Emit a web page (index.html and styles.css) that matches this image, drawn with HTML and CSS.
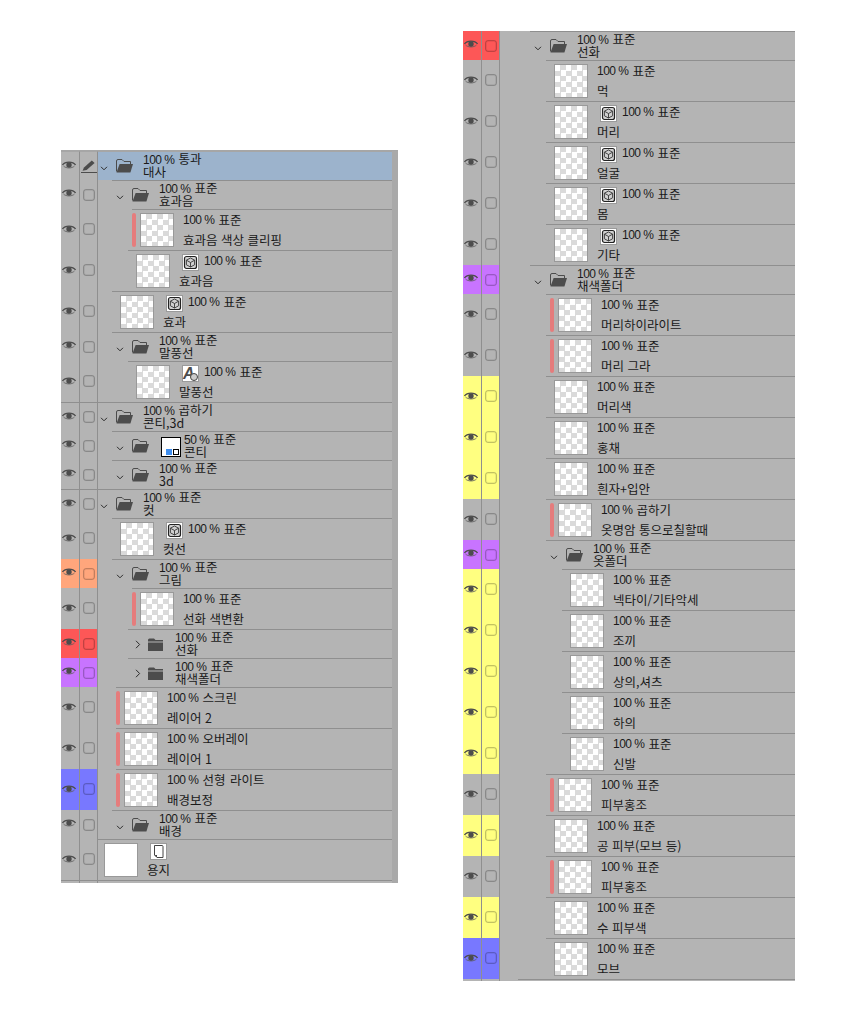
FILE: index.html
```html
<!DOCTYPE html>
<html lang="ko">
<head>
<meta charset="utf-8">
<title>레이어</title>
<link rel="stylesheet" href="styles.css">
</head>
<body>
<svg class="defs" width="0" height="0" aria-hidden="true">
  <symbol id="eye" viewBox="0 0 14 10"><path d="M.5 5C3 1.2 11 1.2 13.5 5" fill="none" stroke="#4c4c4c" stroke-width="1.3"/><path d="M1.5 6C4 8.6 10 8.6 12.5 6" fill="none" stroke="#5c5c5c" stroke-width=".8"/><circle cx="7" cy="5" r="2.7" fill="#4c4c4c"/></symbol>
  <symbol id="open" viewBox="0 0 17 14"><path d="M.5 12.5V2Q.5.5 2 .5H6L8 2.5H14.5V5" fill="none" stroke="#4c4c4c"/><path d="M3.6 5H17L14.4 13.5H.5Z" fill="#4c4c4c"/></symbol>
  <symbol id="closed" viewBox="0 0 15 13"><path d="M0 2Q0 .5 1.5 .5H6L7.5 2H15V3.5H0ZM0 4.5H15V13H0Z" fill="#4c4c4c"/></symbol>
  <symbol id="down" viewBox="0 0 8 5"><path d="M1 .8L4 3.8 7 .8" fill="none" stroke="#2c2c2c"/></symbol>
  <symbol id="right" viewBox="0 0 8 9"><path d="M2 .8L5.6 4.5 2 8.2" fill="none" stroke="#2c2c2c"/></symbol>
  <symbol id="cube" viewBox="0 0 17 17"><rect x=".5" y=".5" width="16" height="16" fill="#fff" stroke="#9a9a9a"/><rect x="2.5" y="2.5" width="12" height="12" rx="2" fill="#d0d0d0" stroke="#222" stroke-width="1.2"/><path d="M8.5 4L12.6 6.2V10.8L8.5 13 4.4 10.8V6.2ZM4.4 6.2L8.5 8.5 12.6 6.2M8.5 8.5V13" fill="none" stroke="#333" stroke-width=".9"/></symbol>
  <symbol id="page" viewBox="0 0 17 17"><rect x=".5" y=".5" width="16" height="16" fill="#fff" stroke="#9a9a9a"/><path d="M4.5 2.5H12Q13 2.5 13 3.5V14.5H7L4.5 12Z" fill="#fff" stroke="#444"/><path d="M4.5 12H7V14.5Z" fill="#444"/></symbol>
  <symbol id="pencil" viewBox="0 0 16 13"><path d="M1.5 10.8L3 7.6 10.8.6 13.6 3 5.6 10Z" fill="#4c4c4c"/><path d="M0 12.5H16" stroke="#4c4c4c"/></symbol>
</svg>

<div class="sheet">
  <section class="panel panel-a">
    <div class="row folder full first selected"><div class="vis"><svg class="eye"><use href="#eye"/></svg></div><div class="lock"><svg class="pencil"><use href="#pencil"/></svg></div><div class="content"><div class="inner root"><span class="chev"><svg class="arrow"><use href="#down"/></svg></span><span class="ficon"><svg class="open"><use href="#open"/></svg></span><div class="ftext"><div><span class="pct">100 %</span><span class="mode">통과</span></div><div>대사</div></div></div></div></div>
    <div class="row folder"><div class="vis"><svg class="eye"><use href="#eye"/></svg></div><div class="lock"><span class="check"></span></div><div class="content"><div class="inner i14"><span class="chev"><svg class="arrow"><use href="#down"/></svg></span><span class="ficon"><svg class="open"><use href="#open"/></svg></span><div class="ftext"><div><span class="pct">100 %</span><span class="mode">표준</span></div><div>효과음</div></div></div></div></div>
    <div class="row layer"><div class="vis"><svg class="eye"><use href="#eye"/></svg></div><div class="lock"><span class="check"></span></div><div class="content"><div class="inner i34"><span class="bar"></span><span class="thumb"></span><div class="ltext"><div class="line"><span class="pct">100 %</span><span class="mode">표준</span></div><div class="line">효과음 색상 클리핑</div></div></div></div></div>
    <div class="row layer"><div class="vis"><svg class="eye"><use href="#eye"/></svg></div><div class="lock"><span class="check"></span></div><div class="content"><div class="inner i30"><span class="thumb plain"></span><div class="ltext"><div class="line"><svg class="kind"><use href="#cube"/></svg><span class="pct">100 %</span><span class="mode">표준</span></div><div class="line">효과음</div></div></div></div></div>
    <div class="row layer"><div class="vis"><svg class="eye"><use href="#eye"/></svg></div><div class="lock"><span class="check"></span></div><div class="content"><div class="inner i14"><span class="thumb plain"></span><div class="ltext"><div class="line"><svg class="kind"><use href="#cube"/></svg><span class="pct">100 %</span><span class="mode">표준</span></div><div class="line">효과</div></div></div></div></div>
    <div class="row folder"><div class="vis"><svg class="eye"><use href="#eye"/></svg></div><div class="lock"><span class="check"></span></div><div class="content"><div class="inner i14"><span class="chev"><svg class="arrow"><use href="#down"/></svg></span><span class="ficon"><svg class="open"><use href="#open"/></svg></span><div class="ftext"><div><span class="pct">100 %</span><span class="mode">표준</span></div><div>말풍선</div></div></div></div></div>
    <div class="row layer"><div class="vis"><svg class="eye"><use href="#eye"/></svg></div><div class="lock"><span class="check"></span></div><div class="content"><div class="inner i30"><span class="thumb plain"></span><div class="ltext"><div class="line"><span class="kind textkind">A</span><span class="pct">100 %</span><span class="mode">표준</span></div><div class="line">말풍선</div></div></div></div></div>
    <div class="row folder full"><div class="vis"><svg class="eye"><use href="#eye"/></svg></div><div class="lock"><span class="check"></span></div><div class="content"><div class="inner root"><span class="chev"><svg class="arrow"><use href="#down"/></svg></span><span class="ficon"><svg class="open"><use href="#open"/></svg></span><div class="ftext"><div><span class="pct">100 %</span><span class="mode">곱하기</span></div><div>콘티,3d</div></div></div></div></div>
    <div class="row folder"><div class="vis"><svg class="eye"><use href="#eye"/></svg></div><div class="lock"><span class="check"></span></div><div class="content"><div class="inner i14"><span class="chev"><svg class="arrow"><use href="#down"/></svg></span><span class="ficon with-mask"><svg class="open"><use href="#open"/></svg></span><span class="mask"><span class="mask-blue"></span><span class="mask-box"></span></span><div class="ftext after-mask"><div><span class="pct">50 %</span><span class="mode">표준</span></div><div>콘티</div></div></div></div></div>
    <div class="row folder"><div class="vis"><svg class="eye"><use href="#eye"/></svg></div><div class="lock"><span class="check"></span></div><div class="content"><div class="inner i14"><span class="chev"><svg class="arrow"><use href="#down"/></svg></span><span class="ficon"><svg class="open"><use href="#open"/></svg></span><div class="ftext"><div><span class="pct">100 %</span><span class="mode">표준</span></div><div>3d</div></div></div></div></div>
    <div class="row folder full"><div class="vis"><svg class="eye"><use href="#eye"/></svg></div><div class="lock"><span class="check"></span></div><div class="content"><div class="inner root"><span class="chev"><svg class="arrow"><use href="#down"/></svg></span><span class="ficon"><svg class="open"><use href="#open"/></svg></span><div class="ftext"><div><span class="pct">100 %</span><span class="mode">표준</span></div><div>컷</div></div></div></div></div>
    <div class="row layer"><div class="vis"><svg class="eye"><use href="#eye"/></svg></div><div class="lock"><span class="check"></span></div><div class="content"><div class="inner i14"><span class="thumb plain"></span><div class="ltext"><div class="line"><svg class="kind"><use href="#cube"/></svg><span class="pct">100 %</span><span class="mode">표준</span></div><div class="line">컷선</div></div></div></div></div>
    <div class="row folder orange"><div class="vis"><svg class="eye"><use href="#eye"/></svg></div><div class="lock"><span class="check"></span></div><div class="content"><div class="inner i14"><span class="chev"><svg class="arrow"><use href="#down"/></svg></span><span class="ficon"><svg class="open"><use href="#open"/></svg></span><div class="ftext"><div><span class="pct">100 %</span><span class="mode">표준</span></div><div>그림</div></div></div></div></div>
    <div class="row layer"><div class="vis"><svg class="eye"><use href="#eye"/></svg></div><div class="lock"><span class="check"></span></div><div class="content"><div class="inner i34"><span class="bar"></span><span class="thumb"></span><div class="ltext"><div class="line"><span class="pct">100 %</span><span class="mode">표준</span></div><div class="line">선화 색변환</div></div></div></div></div>
    <div class="row folder red"><div class="vis"><svg class="eye"><use href="#eye"/></svg></div><div class="lock"><span class="check"></span></div><div class="content"><div class="inner i30"><span class="chev shut"><svg class="arrow-r"><use href="#right"/></svg></span><span class="ficon"><svg class="closed"><use href="#closed"/></svg></span><div class="ftext"><div><span class="pct">100 %</span><span class="mode">표준</span></div><div>선화</div></div></div></div></div>
    <div class="row folder purple"><div class="vis"><svg class="eye"><use href="#eye"/></svg></div><div class="lock"><span class="check"></span></div><div class="content"><div class="inner i30"><span class="chev shut"><svg class="arrow-r"><use href="#right"/></svg></span><span class="ficon"><svg class="closed"><use href="#closed"/></svg></span><div class="ftext"><div><span class="pct">100 %</span><span class="mode">표준</span></div><div>채색폴더</div></div></div></div></div>
    <div class="row layer"><div class="vis"><svg class="eye"><use href="#eye"/></svg></div><div class="lock"><span class="check"></span></div><div class="content"><div class="inner i18"><span class="bar"></span><span class="thumb"></span><div class="ltext"><div class="line"><span class="pct">100 %</span><span class="mode">스크린</span></div><div class="line">레이어 2</div></div></div></div></div>
    <div class="row layer"><div class="vis"><svg class="eye"><use href="#eye"/></svg></div><div class="lock"><span class="check"></span></div><div class="content"><div class="inner i18"><span class="bar"></span><span class="thumb"></span><div class="ltext"><div class="line"><span class="pct">100 %</span><span class="mode">오버레이</span></div><div class="line">레이어 1</div></div></div></div></div>
    <div class="row layer blue"><div class="vis"><svg class="eye"><use href="#eye"/></svg></div><div class="lock"><span class="check"></span></div><div class="content"><div class="inner i18"><span class="bar"></span><span class="thumb"></span><div class="ltext"><div class="line"><span class="pct">100 %</span><span class="mode">선형 라이트</span></div><div class="line">배경보정</div></div></div></div></div>
    <div class="row folder"><div class="vis"><svg class="eye"><use href="#eye"/></svg></div><div class="lock"><span class="check"></span></div><div class="content"><div class="inner i14"><span class="chev"><svg class="arrow"><use href="#down"/></svg></span><span class="ficon"><svg class="open"><use href="#open"/></svg></span><div class="ftext"><div><span class="pct">100 %</span><span class="mode">표준</span></div><div>배경</div></div></div></div></div>
    <div class="row layer"><div class="vis"><svg class="eye"><use href="#eye"/></svg></div><div class="lock"><span class="check"></span></div><div class="content rule-top"><div class="inner root"><span class="thumb plain paper"></span><div class="ltext"><div class="line"><svg class="kind"><use href="#page"/></svg></div><div class="line">용지</div></div></div></div></div>
    <div class="foot foot-a"><div class="vis"></div><div class="lock"></div><div class="content"></div></div>
  </section>

  <section class="panel panel-b">
    <div class="row folder red"><div class="vis"><svg class="eye"><use href="#eye"/></svg></div><div class="lock"><span class="check"></span></div><div class="content"><div class="inner i30"><span class="chev"><svg class="arrow"><use href="#down"/></svg></span><span class="ficon"><svg class="open"><use href="#open"/></svg></span><div class="ftext"><div><span class="pct">100 %</span><span class="mode">표준</span></div><div>선화</div></div></div></div></div>
    <div class="row layer"><div class="vis"><svg class="eye"><use href="#eye"/></svg></div><div class="lock"><span class="check"></span></div><div class="content"><div class="inner i46"><span class="thumb plain"></span><div class="ltext"><div class="line"><span class="pct">100 %</span><span class="mode">표준</span></div><div class="line">먹</div></div></div></div></div>
    <div class="row layer"><div class="vis"><svg class="eye"><use href="#eye"/></svg></div><div class="lock"><span class="check"></span></div><div class="content"><div class="inner i46"><span class="thumb plain"></span><div class="ltext"><div class="line"><svg class="kind"><use href="#cube"/></svg><span class="pct">100 %</span><span class="mode">표준</span></div><div class="line">머리</div></div></div></div></div>
    <div class="row layer"><div class="vis"><svg class="eye"><use href="#eye"/></svg></div><div class="lock"><span class="check"></span></div><div class="content"><div class="inner i46"><span class="thumb plain"></span><div class="ltext"><div class="line"><svg class="kind"><use href="#cube"/></svg><span class="pct">100 %</span><span class="mode">표준</span></div><div class="line">얼굴</div></div></div></div></div>
    <div class="row layer"><div class="vis"><svg class="eye"><use href="#eye"/></svg></div><div class="lock"><span class="check"></span></div><div class="content"><div class="inner i46"><span class="thumb plain"></span><div class="ltext"><div class="line"><svg class="kind"><use href="#cube"/></svg><span class="pct">100 %</span><span class="mode">표준</span></div><div class="line">몸</div></div></div></div></div>
    <div class="row layer"><div class="vis"><svg class="eye"><use href="#eye"/></svg></div><div class="lock"><span class="check"></span></div><div class="content"><div class="inner i46"><span class="thumb plain"></span><div class="ltext"><div class="line"><svg class="kind"><use href="#cube"/></svg><span class="pct">100 %</span><span class="mode">표준</span></div><div class="line">기타</div></div></div></div></div>
    <div class="row folder purple"><div class="vis"><svg class="eye"><use href="#eye"/></svg></div><div class="lock"><span class="check"></span></div><div class="content"><div class="inner i30"><span class="chev"><svg class="arrow"><use href="#down"/></svg></span><span class="ficon"><svg class="open"><use href="#open"/></svg></span><div class="ftext"><div><span class="pct">100 %</span><span class="mode">표준</span></div><div>채색폴더</div></div></div></div></div>
    <div class="row layer"><div class="vis"><svg class="eye"><use href="#eye"/></svg></div><div class="lock"><span class="check"></span></div><div class="content"><div class="inner i46"><span class="bar"></span><span class="thumb"></span><div class="ltext"><div class="line"><span class="pct">100 %</span><span class="mode">표준</span></div><div class="line">머리하이라이트</div></div></div></div></div>
    <div class="row layer"><div class="vis"><svg class="eye"><use href="#eye"/></svg></div><div class="lock"><span class="check"></span></div><div class="content"><div class="inner i46"><span class="bar"></span><span class="thumb"></span><div class="ltext"><div class="line"><span class="pct">100 %</span><span class="mode">표준</span></div><div class="line">머리 그라</div></div></div></div></div>
    <div class="row layer yellow"><div class="vis"><svg class="eye"><use href="#eye"/></svg></div><div class="lock"><span class="check"></span></div><div class="content"><div class="inner i46"><span class="thumb plain"></span><div class="ltext"><div class="line"><span class="pct">100 %</span><span class="mode">표준</span></div><div class="line">머리색</div></div></div></div></div>
    <div class="row layer yellow"><div class="vis"><svg class="eye"><use href="#eye"/></svg></div><div class="lock"><span class="check"></span></div><div class="content"><div class="inner i46"><span class="thumb plain"></span><div class="ltext"><div class="line"><span class="pct">100 %</span><span class="mode">표준</span></div><div class="line">홍채</div></div></div></div></div>
    <div class="row layer yellow"><div class="vis"><svg class="eye"><use href="#eye"/></svg></div><div class="lock"><span class="check"></span></div><div class="content"><div class="inner i46"><span class="thumb plain"></span><div class="ltext"><div class="line"><span class="pct">100 %</span><span class="mode">표준</span></div><div class="line">흰자+입안</div></div></div></div></div>
    <div class="row layer"><div class="vis"><svg class="eye"><use href="#eye"/></svg></div><div class="lock"><span class="check"></span></div><div class="content"><div class="inner i46"><span class="bar"></span><span class="thumb"></span><div class="ltext"><div class="line"><span class="pct">100 %</span><span class="mode">곱하기</span></div><div class="line">옷명암 통으로칠할때</div></div></div></div></div>
    <div class="row folder purple"><div class="vis"><svg class="eye"><use href="#eye"/></svg></div><div class="lock"><span class="check"></span></div><div class="content"><div class="inner i46"><span class="chev"><svg class="arrow"><use href="#down"/></svg></span><span class="ficon"><svg class="open"><use href="#open"/></svg></span><div class="ftext"><div><span class="pct">100 %</span><span class="mode">표준</span></div><div>옷폴더</div></div></div></div></div>
    <div class="row layer yellow"><div class="vis"><svg class="eye"><use href="#eye"/></svg></div><div class="lock"><span class="check"></span></div><div class="content"><div class="inner i62"><span class="thumb plain"></span><div class="ltext"><div class="line"><span class="pct">100 %</span><span class="mode">표준</span></div><div class="line">넥타이/기타악세</div></div></div></div></div>
    <div class="row layer yellow"><div class="vis"><svg class="eye"><use href="#eye"/></svg></div><div class="lock"><span class="check"></span></div><div class="content"><div class="inner i62"><span class="thumb plain"></span><div class="ltext"><div class="line"><span class="pct">100 %</span><span class="mode">표준</span></div><div class="line">조끼</div></div></div></div></div>
    <div class="row layer yellow"><div class="vis"><svg class="eye"><use href="#eye"/></svg></div><div class="lock"><span class="check"></span></div><div class="content"><div class="inner i62"><span class="thumb plain"></span><div class="ltext"><div class="line"><span class="pct">100 %</span><span class="mode">표준</span></div><div class="line">상의,셔츠</div></div></div></div></div>
    <div class="row layer yellow"><div class="vis"><svg class="eye"><use href="#eye"/></svg></div><div class="lock"><span class="check"></span></div><div class="content"><div class="inner i62"><span class="thumb plain"></span><div class="ltext"><div class="line"><span class="pct">100 %</span><span class="mode">표준</span></div><div class="line">하의</div></div></div></div></div>
    <div class="row layer yellow"><div class="vis"><svg class="eye"><use href="#eye"/></svg></div><div class="lock"><span class="check"></span></div><div class="content"><div class="inner i62"><span class="thumb plain"></span><div class="ltext"><div class="line"><span class="pct">100 %</span><span class="mode">표준</span></div><div class="line">신발</div></div></div></div></div>
    <div class="row layer"><div class="vis"><svg class="eye"><use href="#eye"/></svg></div><div class="lock"><span class="check"></span></div><div class="content"><div class="inner i46"><span class="bar"></span><span class="thumb"></span><div class="ltext"><div class="line"><span class="pct">100 %</span><span class="mode">표준</span></div><div class="line">피부홍조</div></div></div></div></div>
    <div class="row layer yellow"><div class="vis"><svg class="eye"><use href="#eye"/></svg></div><div class="lock"><span class="check"></span></div><div class="content"><div class="inner i46"><span class="thumb plain"></span><div class="ltext"><div class="line"><span class="pct">100 %</span><span class="mode">표준</span></div><div class="line">공 피부(모브 등)</div></div></div></div></div>
    <div class="row layer"><div class="vis"><svg class="eye"><use href="#eye"/></svg></div><div class="lock"><span class="check"></span></div><div class="content"><div class="inner i46"><span class="bar"></span><span class="thumb"></span><div class="ltext"><div class="line"><span class="pct">100 %</span><span class="mode">표준</span></div><div class="line">피부홍조</div></div></div></div></div>
    <div class="row layer yellow"><div class="vis"><svg class="eye"><use href="#eye"/></svg></div><div class="lock"><span class="check"></span></div><div class="content"><div class="inner i46"><span class="thumb plain"></span><div class="ltext"><div class="line"><span class="pct">100 %</span><span class="mode">표준</span></div><div class="line">수 피부색</div></div></div></div></div>
    <div class="row layer blue"><div class="vis"><svg class="eye"><use href="#eye"/></svg></div><div class="lock"><span class="check"></span></div><div class="content"><div class="inner i46"><span class="thumb plain"></span><div class="ltext"><div class="line"><span class="pct">100 %</span><span class="mode">표준</span></div><div class="line">모브</div></div></div></div></div>
    <div class="foot foot-b"><div class="vis"></div><div class="lock"></div><div class="content"><div class="inner i18"></div></div></div>
  </section>
</div>
</body>
</html>
```

FILE: styles.css
```css
* { box-sizing: border-box; }

html, body { margin: 0; background: #fff; }

body {
  font-family: "Noto Sans CJK KR", "Liberation Sans", sans-serif;
  font-size: 12.5px;
  color: #1a1a1a;
}

.defs { position: absolute; }

.sheet {
  display: flex;
  align-items: flex-start;
  padding-left: 61px;
  gap: 65px;
}

.panel { background: #b4b4b4; }

.panel-a {
  width: 337px;
  margin-top: 150px;
  padding-right: 6px;
  border-top: 1px solid #a6a6a6;
  background: #a9a9a9;
}

.panel-b { width: 332px; margin-top: 31px; }

.row, .foot {
  display: flex;
  background: #b4b4b4;
}
.row.layer { height: 41px; }
.row.folder { height: 29px; }

.vis, .lock {
  flex: none;
  display: flex;
  align-items: center;
  background: var(--tag, transparent);
  border-right: 1px solid #8f8f8f;
}
.vis { width: 19px; padding-left: 1px; }
.lock { width: 18px; justify-content: center; }
.layer .vis { padding-bottom: 2px; }
.folder .vis { padding-bottom: 3px; }
.layer .lock { padding-bottom: 1px; }

.content { flex: 1; min-width: 0; }
.rule-top { border-top: 1px solid #8f8f8f; }

.inner {
  display: flex;
  align-items: center;
  height: 100%;
  border-top: 1px solid #8f8f8f;
  white-space: nowrap;
}

.full > * { border-top: 1px solid #8f8f8f; }
.full .inner { border-top: 0; }
.first > * { border-top-color: #a6a6a6; }
.selected .content { background: #9cb3cc; }

.root { margin-left: -2px; border-top: 0; }
.i14 { margin-left: 14px; }
.i18 { margin-left: 18px; }
.i30 { margin-left: 30px; }
.i34 { margin-left: 34px; }
.i46 { margin-left: 46px; }
.i62 { margin-left: 62px; }

.red { --tag: #fd5757; }
.orange { --tag: #ffa67c; }
.purple { --tag: #c874ff; }
.yellow { --tag: #ffff80; }
.blue { --tag: #7878ff; }

.eye { width: 14px; height: 10px; display: block; }

.check {
  width: 12px;
  height: 12px;
  border: 1px solid rgba(0, 0, 0, .24);
  border-radius: 3px;
  box-shadow: inset 0 0 0 1px rgba(0, 0, 0, .07);
}

.pencil { width: 16px; height: 13px; display: block; margin-top: 1px; }

.chev {
  flex: none;
  width: 20px;
  padding: 4px 0 0 4px;
  display: flex;
}
.arrow { width: 8px; height: 5px; display: block; }
.shut { padding: 0 0 0 6px; }
.arrow-r { width: 8px; height: 9px; display: block; }

.ficon { flex: none; width: 27px; display: flex; }
.with-mask { width: 29px; }
.open { width: 17px; height: 14px; display: block; }
.closed { width: 15px; height: 13px; display: block; }

.mask {
  flex: none;
  position: relative;
  width: 20px;
  height: 20px;
  background: #fff;
  border: 1px solid #000;
  margin-top: 1px;
}
.mask-blue {
  position: absolute;
  left: 4px;
  bottom: 1px;
  width: 6px;
  height: 6px;
  background: #3f8eee;
}
.mask-box {
  position: absolute;
  left: 11px;
  bottom: 1px;
  width: 6px;
  height: 6px;
  background: #fff;
  border: 1px solid #000;
}

.ftext { line-height: 12px; padding-bottom: 1px; }
.after-mask { margin-left: 3px; }

.thumb {
  flex: none;
  width: 34px;
  height: 34px;
  border: 1px solid #999;
  background: conic-gradient(#dadada 25%, #fff 0 50%, #dadada 0 75%, #fff 0) 0 0 / 11px 11px;
}
.plain { margin-left: 8px; }
.paper { background: #fff; }

.bar {
  flex: none;
  width: 4px;
  height: 34px;
  margin-right: 4px;
  background: #e57c7c;
  border-radius: 2px;
}
.panel-b .bar { margin-left: 4px; }

.ltext { margin-left: 9px; line-height: 20px; }
.line { display: flex; align-items: center; height: 20px; }

.pct {
  font-family: "Liberation Sans", sans-serif;
  font-size: 12px;
  letter-spacing: -.5px;
  margin-right: 4px;
}
.mode { word-spacing: 1px; }

.kind {
  flex: none;
  width: 17px;
  height: 17px;
  margin: 3px 5px 0 3px;
  display: block;
}

.textkind {
  position: relative;
  background: #fff;
  border: 1px solid #9a9a9a;
  color: #4c4c4c;
  font-family: "Liberation Sans", sans-serif;
  font-style: italic;
  font-weight: bold;
  font-size: 16px;
  line-height: 15px;
  text-align: left;
}
.textkind::after {
  content: "";
  position: absolute;
  right: 0;
  bottom: 0;
  width: 6px;
  height: 6px;
  border: 1px solid #444;
  border-radius: 50%;
  background: #ccc;
}

.foot .vis, .foot .lock { background: transparent; }
.foot-a { height: 3px; border-top: 1px solid #8f8f8f; }
.foot-b { height: 2px; }
```
